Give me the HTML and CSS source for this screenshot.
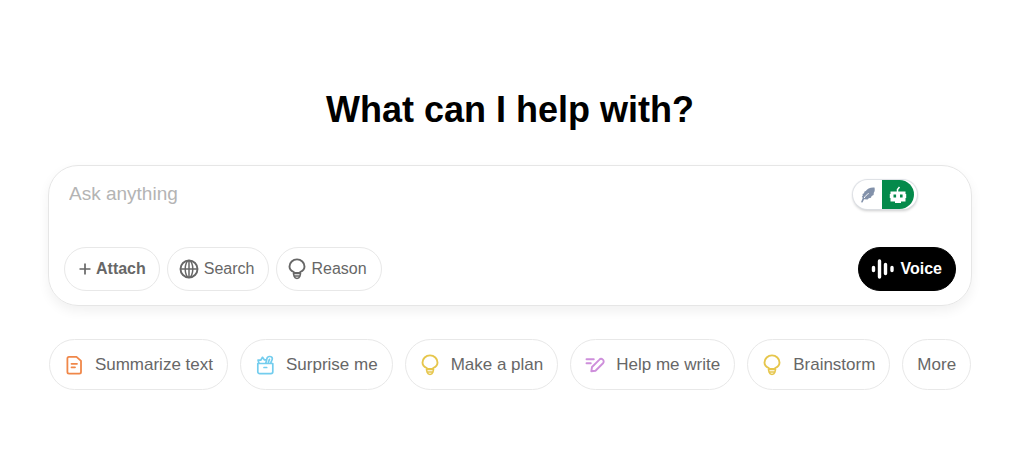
FILE: index.html
```html
<!DOCTYPE html>
<html lang="en">
<head>
<meta charset="utf-8">
<title>Assistant</title>
<link rel="stylesheet" href="styles.css">
</head>
<body>
<svg class="defs" aria-hidden="true">
  <symbol id="bulb" viewBox="0 0 18 22">
    <path d="M5.800 15v-1C3.200 12.800 1.500 11 1.500 8.400a7.500 7 0 0 1 15 0c0 2.600-1.700 4.400-4.300 5.600v1z" fill="none" stroke="currentColor" stroke-width="1.900" stroke-linejoin="round"/>
    <path d="M5.200 15.500h7.600M6 18h6M5.300 15l.9 3.500c.9 2.500 4.700 2.500 5.600 0l.9-3.500" fill="none" stroke="currentColor" stroke-width="1.500" stroke-linejoin="round"/>
  </symbol>
</svg>
<main class="page">
  <h1 class="title">What can I help with?</h1>
  <form class="composer">
    <div class="entry">
      <textarea class="prompt" rows="1" placeholder="Ask anything" aria-label="Ask anything"></textarea>
      <div class="assist">
        <button type="button" class="assist-quill" aria-label="Rewrite">
          <svg width="16" height="18" viewBox="0 0 16 18"><path d="M14.500 1.500C10.500 1 7 3 5.800 5L4.500 5.500 4 7.300 2.500 8l.3 1.500-1 1.500 1 .8L1 16.300l1.500.2 1.600-3.200 3.400.2 1.300-1.300 2.200-.4.600-1.800 2-1 .2-2.200C14.800 5.500 15 3.500 14.500 1.500z" fill="#8291aa"/><path d="M4.200 12C5.500 9.800 6.800 8.500 8.700 7.500" fill="none" stroke="#fff" stroke-width="1"/></svg>
        </button>
        <button type="button" class="assist-bot" aria-label="Assistant">
          <svg width="18" height="18" viewBox="0 0 18 18"><path d="M8.500 6V3.500L10.500 1" fill="none" stroke="#fff" stroke-width="1.500"/><path d="M1.500 5.500h15V8h.7v4h-.7v3.500h-15V12H.8V8h.7zM6 15h6v2H6z" fill="#fff"/><path d="M4.500 8.500h2.600v3H4.500zM11 8.500h2.600v3H11z" fill="#048a4b"/></svg>
        </button>
      </div>
    </div>
    <div class="tools">
      <button type="button" class="tool attach"><svg width="12" height="12" viewBox="0 0 12 12"><path d="M6 .5v11M.5 6h11" stroke="currentColor" stroke-width="1.700"/></svg>Attach</button>
      <button type="button" class="tool"><svg width="20" height="20" viewBox="0 0 20 20" fill="none" stroke="currentColor" stroke-width="1.900"><circle cx="10" cy="10" r="8.500"/><ellipse cx="10" cy="10" rx="3.800" ry="8.500" stroke-width="1.500"/><path d="M1.500 10h17M10 1.500v17" stroke-width="1.500"/></svg>Search</button>
      <button type="button" class="tool"><svg width="18" height="22"><use href="#bulb"/></svg>Reason</button>
      <button type="button" class="voice"><svg width="24" height="20" viewBox="0 0 24 20"><path d="M2.500 8.500v3M8.500 2v16M14.500 5.500v9M21 8.500v3" stroke="currentColor" stroke-width="3.400" stroke-linecap="round"/></svg>Voice</button>
    </div>
  </form>
  <nav class="chips" aria-label="Suggestions">
    <button type="button" class="chip orange"><svg width="20" height="20" viewBox="0 0 20 20" fill="none" stroke="currentColor" stroke-width="1.800" stroke-linejoin="round" stroke-linecap="round"><path d="M5 1.800h7.500l4.500 4V17a1.600 1.600 0 0 1-1.600 1.600H5A1.600 1.600 0 0 1 3.400 17V3.400A1.600 1.600 0 0 1 5 1.800zM7.500 8.800h5.500M7.500 12.300h3.500"/></svg><span>Summarize text</span></button>
    <button type="button" class="chip blue"><svg width="20" height="20" viewBox="0 0 20 20" fill="none" stroke="currentColor" stroke-width="1.700" stroke-linejoin="round" stroke-linecap="round"><path d="M2.800 8.500h15v8.300a1.900 1.900 0 0 1-1.900 1.900H4.700a1.900 1.900 0 0 1-1.900-1.900zM9 12.500h2.700M4 8.300 3 5l2.700.2L7.500 2.300l1.800 2.500 2.500-.2-1 3.500M11.800 4c.2-3.200 5.300-3.300 5.500-.4.100 1.600-1.300 2.400-1.500 4.700M13.300 8.300c.1-1.800.6-2.500 1.200-3.900"/></svg><span>Surprise me</span></button>
    <button type="button" class="chip yellow"><svg width="20" height="22" viewBox="0 0 18 22"><use href="#bulb"/></svg><span>Make a plan</span></button>
    <button type="button" class="chip purple"><svg width="20" height="20" viewBox="0 0 20 20" fill="none" stroke="currentColor" stroke-width="1.900" stroke-linejoin="round" stroke-linecap="round"><path d="M6.300 16.300 7 12l7.200-7.200a2.500 2.500 0 0 1 3.800 3.500l-7.500 7.400zM1.500 4.200h7.300M1.500 8.200h4.300"/></svg><span>Help me write</span></button>
    <button type="button" class="chip yellow"><svg width="20" height="22" viewBox="0 0 18 22"><use href="#bulb"/></svg><span>Brainstorm</span></button>
    <button type="button" class="chip"><span>More</span></button>
  </nav>
</main>
</body>
</html>
```
FILE: styles.css
```css
* { box-sizing: border-box; }
body {
  margin: 0;
  background: #fff;
  color: #676767;
  font-family: "Liberation Sans", Arial, sans-serif;
}
button, textarea { font: inherit; color: inherit; }
button { cursor: pointer; white-space: nowrap; }
svg { display: block; flex: none; }
.defs { position: absolute; width: 0; height: 0; }
.page { padding: 88px 52px 0 48px; }
.title {
  margin: 0 0 33px;
  color: #000;
  font-size: 36px;
  line-height: 44px;
  text-align: center;
}
.composer {
  padding: 14px 15px;
  border: 1px solid #e6e6e6;
  border-radius: 30px;
  box-shadow: 0 5px 12px rgba(0, 0, 0, 0.06);
}
.entry {
  display: flex;
  align-items: flex-start;
  padding: 0 39px 0 5px;
  margin-bottom: 36px;
}
.prompt {
  flex: 1;
  height: 31px;
  padding: 0;
  border: 0;
  outline: 0;
  resize: none;
  background: none;
  font-size: 19px;
  line-height: 28px;
}
.prompt::placeholder { color: #b4b4b4; opacity: 1; }
.assist {
  display: flex;
  height: 29px;
  padding-right: 3px;
  border-radius: 15px;
  background: #fff;
  box-shadow: 0 0 1px 1px #dcdfe4, 0 2px 3px rgba(0, 0, 0, 0.2);
}
.assist button {
  display: flex;
  align-items: center;
  justify-content: center;
  padding: 0;
  border: 0;
}
.assist-quill { width: 29px; background: none; }
.assist-bot { width: 32px; border-radius: 0 15px 15px 0; background: #048a4b; }
.tools { display: flex; gap: 7px; }
.tool, .voice {
  display: flex;
  align-items: center;
  gap: 5px;
  height: 44px;
  padding: 0 14px 0 11px;
  border: 1px solid #e8e8e8;
  border-radius: 22px;
  background: #fff;
  font-size: 16px;
}
.attach { padding: 0 13px 0 14px; }
.attach { font-weight: bold; }
.voice {
  margin-left: auto;
  gap: 6px;
  padding: 0 13px 0 12px;
  border-color: #000;
  background: #000;
  color: #fff;
  font-weight: bold;
}
.chips {
  display: flex;
  flex-wrap: wrap;
  justify-content: center;
  gap: 12px;
  margin-top: 33px;
}
.chip {
  display: flex;
  align-items: center;
  gap: 11px;
  height: 51px;
  padding: 0 14px;
  border: 1px solid #e8e8e8;
  border-radius: 26px;
  background: #fff;
  font-size: 17px;
}
.chip span { color: #676767; }
.orange { color: #f08749; }
.blue { color: #73cdee; }
.yellow { color: #e6c64c; }
.purple { color: #ce8fdb; }
```
